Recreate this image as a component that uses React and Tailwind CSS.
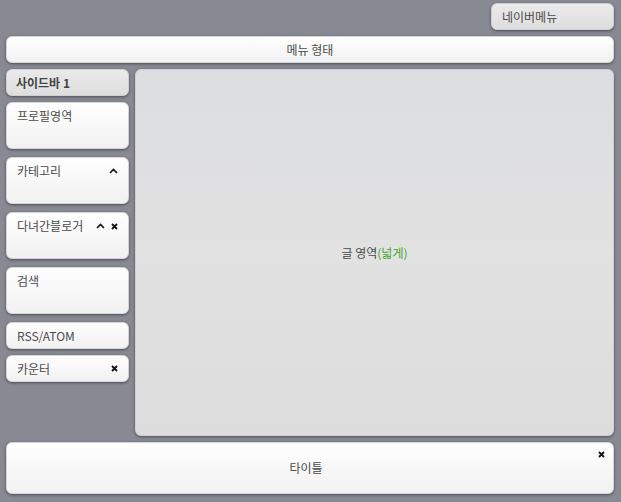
import React from "react";

const font = { fontFamily: '"Noto Sans CJK KR", "Noto Sans", sans-serif' };

function Caret() {
  return (
    <svg width="9" height="6" viewBox="0 0 9 6" className="block">
      <path d="M1 5 L4.5 1.5 L8 5" fill="none" stroke="#111" strokeWidth="1.6" />
    </svg>
  );
}

function Close() {
  return (
    <svg width="7" height="7" viewBox="0 0 7 7" className="block">
      <path d="M1 1 L6 6 M6 1 L1 6" fill="none" stroke="#111" strokeWidth="1.8" />
    </svg>
  );
}

const whiteBox =
  "rounded-[6px] bg-gradient-to-b from-[#ffffff] to-[#f1f1f1] border border-[#d6d6d8] shadow-[0_1px_3px_rgba(0,0,0,0.45)]";
const grayBox =
  "rounded-[6px] bg-gradient-to-b from-[#eaeaea] to-[#dedede] border border-[#cfcfd2] shadow-[0_1px_3px_rgba(0,0,0,0.45)]";

function SideItem({ label, tall = true, caret, close, className = "" }) {
  return (
    <div
      className={`${whiteBox} ${tall ? "h-[47px] pt-[4px]" : "h-[27px] flex items-center"} pl-[10px] pr-[10px] ${className}`}
    >
      <div className="flex items-center justify-between w-full">
        <span className="text-[12px] text-[#4a4a4a]">{label}</span>
        <div className="flex items-center gap-[6px]">
          {caret && <Caret />}
          {close && <Close />}
        </div>
      </div>
    </div>
  );
}

export default function App() {
  return (
    <div
      className="w-[621px] h-[502px] bg-[#878a93] pl-[6px] pr-[7px] pt-[3px] flex flex-col overflow-hidden"
      style={font}
    >
      <div className="flex justify-end">
        <div className={`${grayBox} w-[123px] h-[27px] flex items-center pl-[10px]`}>
          <span className="text-[12px] text-[#4a4a4a]">네이버메뉴</span>
        </div>
      </div>

      <div className={`${whiteBox} mt-[6px] h-[27px] flex items-center justify-center`}>
        <span className="text-[12px] text-[#4a4a4a]">메뉴 형태</span>
      </div>

      <div className="mt-[6px] flex gap-[6px] h-[367px]">
        <div className="w-[123px] flex flex-col">
          <div className={`${grayBox} h-[27px] flex items-center pl-[9px]`}>
            <span className="text-[12px] font-bold text-[#444]">사이드바 1</span>
          </div>
          <SideItem label="프로필영역" className="mt-[6px]" />
          <SideItem label="카테고리" caret className="mt-[8px]" />
          <SideItem label="다녀간블로거" caret close className="mt-[8px]" />
          <SideItem label="검색" className="mt-[8px]" />
          <SideItem label="RSS/ATOM" tall={false} className="mt-[8px]" />
          <SideItem label="카운터" tall={false} close className="mt-[6px]" />
        </div>
        <div className="flex-1 rounded-[6px] bg-gradient-to-b from-[#dcdde0] via-[#e2e2e2] to-[#dcdcdc] border border-[#cfcfd2] shadow-[0_1px_3px_rgba(0,0,0,0.45)] flex items-center justify-center">
          <span className="text-[12px] text-[#4a4a4a]">
            글 영역<span className="text-[#3daa2c]">(넓게)</span>
          </span>
        </div>
      </div>

      <div className={`${whiteBox} mt-[6px] h-[52px] flex flex-col pr-[8px]`}>
        <div className="flex justify-end pt-[8px]">
          <Close />
        </div>
        <div className="flex justify-center mt-[1px]">
          <span className="text-[12px] text-[#4a4a4a]">타이틀</span>
        </div>
      </div>
    </div>
  );
}
